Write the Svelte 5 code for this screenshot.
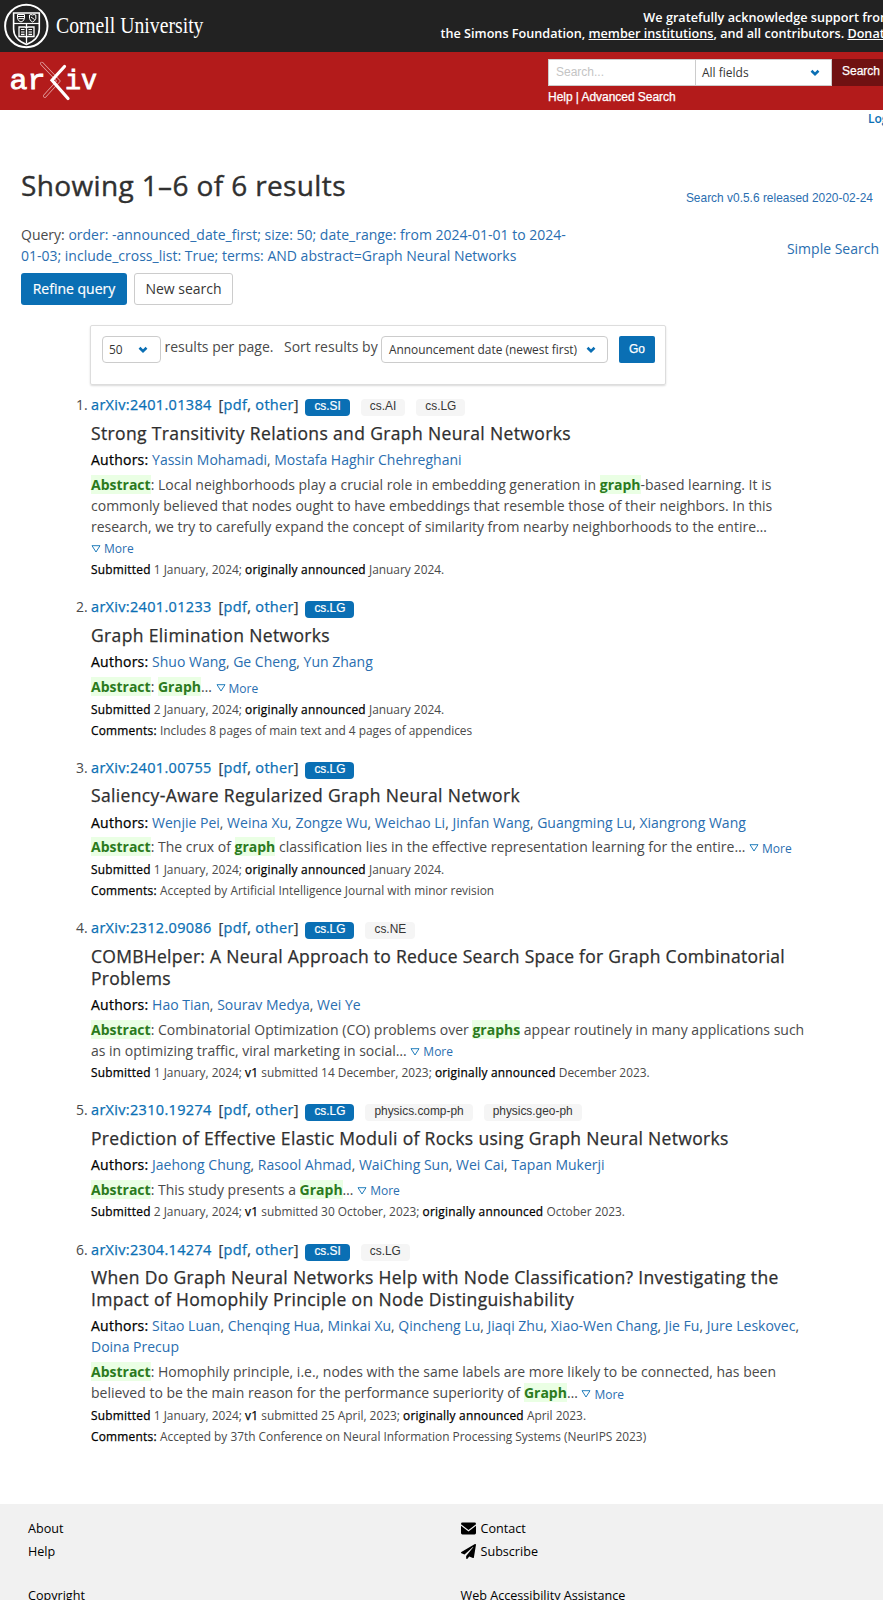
<script>
  const papers = [
    {
      id: '2401.01384',
      tags: ['cs.SI', 'cs.AI', 'cs.LG'],
      title: ['Strong Transitivity Relations and Graph Neural Networks'],
      authors: ['Yassin Mohamadi', 'Mostafa Haghir Chehreghani'],
      abstract: [
        ['Local neighborhoods play a crucial role in embedding generation in ', '*graph', '-based learning. It is'],
        ['commonly believed that nodes ought to have embeddings that resemble those of their neighbors. In this'],
        ['research, we try to carefully expand the concept of similarity from nearby neighborhoods to the entire…'],
        []
      ],
      submitted: '1 January, 2024',
      announced: 'January 2024'
    },
    {
      id: '2401.01233',
      tags: ['cs.LG'],
      title: ['Graph Elimination Networks'],
      authors: ['Shuo Wang', 'Ge Cheng', 'Yun Zhang'],
      abstract: [['*Graph', '… ']],
      submitted: '2 January, 2024',
      announced: 'January 2024',
      comments: 'Includes 8 pages of main text and 4 pages of appendices'
    },
    {
      id: '2401.00755',
      tags: ['cs.LG'],
      title: ['Saliency-Aware Regularized Graph Neural Network'],
      authors: ['Wenjie Pei', 'Weina Xu', 'Zongze Wu', 'Weichao Li', 'Jinfan Wang', 'Guangming Lu', 'Xiangrong Wang'],
      abstract: [['The crux of ', '*graph', ' classification lies in the effective representation learning for the entire… ']],
      submitted: '1 January, 2024',
      announced: 'January 2024',
      comments: 'Accepted by Artificial Intelligence Journal with minor revision'
    },
    {
      id: '2312.09086',
      tags: ['cs.LG', 'cs.NE'],
      title: ['COMBHelper: A Neural Approach to Reduce Search Space for Graph Combinatorial', 'Problems'],
      tracking: 0.28,
      authors: ['Hao Tian', 'Sourav Medya', 'Wei Ye'],
      abstract: [
        ['Combinatorial Optimization (CO) problems over ', '*graphs', ' appear routinely in many applications such'],
        ['as in optimizing traffic, viral marketing in social… ']
      ],
      submitted: '1 January, 2024',
      v1: '14 December, 2023',
      announced: 'December 2023'
    },
    {
      id: '2310.19274',
      tags: ['cs.LG', 'physics.comp-ph', 'physics.geo-ph'],
      title: ['Prediction of Effective Elastic Moduli of Rocks using Graph Neural Networks'],
      tracking: 0.33,
      authors: ['Jaehong Chung', 'Rasool Ahmad', 'WaiChing Sun', 'Wei Cai', 'Tapan Mukerji'],
      abstract: [['This study presents a ', '*Graph', '… ']],
      submitted: '2 January, 2024',
      v1: '30 October, 2023',
      announced: 'October 2023'
    },
    {
      id: '2304.14274',
      tags: ['cs.SI', 'cs.LG'],
      title: ['When Do Graph Neural Networks Help with Node Classification? Investigating the', 'Impact of Homophily Principle on Node Distinguishability'],
      tracking: 0.335,
      authors: ['Sitao Luan', 'Chenqing Hua', 'Minkai Xu', 'Qincheng Lu', 'Jiaqi Zhu', 'Xiao-Wen Chang', 'Jie Fu', 'Jure Leskovec', 'Doina Precup'],
      abstract: [
        ['Homophily principle, i.e., nodes with the same labels are more likely to be connected, has been'],
        ['believed to be the main reason for the performance superiority of ', '*Graph', '… ']
      ],
      submitted: '1 January, 2024',
      v1: '25 April, 2023',
      announced: 'April 2023',
      comments: 'Accepted by 37th Conference on Neural Information Processing Systems (NeurIPS 2023)'
    }
  ];
</script>

{#snippet chevron()}
  <svg class="chev" width="10" height="8" viewBox="0 0 10 8"><path d="M1.5 1.8 L5 5.2 L8.5 1.8" fill="none" stroke="#0a6fb4" stroke-width="2.6" /></svg>
{/snippet}

<div class="page">
  <header class="top">
    <svg class="cornell" width="220" height="52" viewBox="0 0 220 52">
      <g fill="none" stroke="#fff">
        <circle cx="26.3" cy="26" r="21.2" stroke-width="2" />
        <path d="M13.6 13 H39.3 V29 C39.3 37 34 41.500 26.400 44.500 C19 41.500 13.600 37 13.600 29 Z" stroke-width="1.6" />
        <path d="M14 23.500 H39" stroke-width="1.200" />
        <path d="M17.500 14.500 H24.500 V18.500 Q24 21 21 22 Q18 21 17.500 18.500 Z M18 16.500 H24 M18.500 18.600 H24" stroke-width="1" />
        <path d="M29.500 15 Q31 14 32.500 15 Q34 14 35.800 15 V18.500 Q35 21 32.600 22 Q30 21 29.500 18.500 Z M31 17 L34.500 19.500" stroke-width="1" />
        <path d="M19 27 H25 L26.500 28 L28 27 H34 V36.500 H28 L26.500 37.500 L25 36.500 H19 Z M26.500 24 V43.500" stroke-width="1.300" />
        <path d="M21 29.500 H24.500 M21 32 H24.500 M21 34.400 H24.500 M28.500 29.500 H32 M28.500 32 H32 M28.500 34.400 H32" stroke-width="1.200" />
      </g>
      <text x="56" y="33" textLength="147.500" lengthAdjust="spacingAndGlyphs" class="wordmark">Cornell University</text>
    </svg>
    <div class="support">
      <div>We gratefully acknowledge support from</div>
      <div>the Simons Foundation, <a href="#m">member institutions</a>, and all contributors. <a href="#d">Donate</a></div>
    </div>
  </header>

  <div class="red">
    <svg width="100" height="58" viewBox="0 52 100 58">
      <text x="9.500" y="88.500" textLength="36" lengthAdjust="spacingAndGlyphs" class="logo">ar</text>
      <text x="65" y="88.500" textLength="32" lengthAdjust="spacingAndGlyphs" class="logo">iv</text>
      <g fill="none" stroke-linecap="round">
        <path d="M41.800 63.500 L58.500 81 L44.800 96" stroke="#e9b4b4" stroke-width="3.400" />
        <path d="M41.800 63.500 L58.500 81 L44.800 96" stroke="#b31b1b" stroke-width="2.200" />
        <path d="M64.500 66.500 L52 80.300 L68 98.500" stroke="#fff" stroke-width="3.200" />
      </g>
    </svg>
    <div class="search">
      <div class="fields">
        <div class="input">Search...</div>
        <div class="allsel"><span>All fields</span>{@render chevron()}</div>
        <button class="sbtn">Search</button>
      </div>
      <div class="help">Help | Advanced Search</div>
    </div>
  </div>
  <div class="login">Login</div>

  <main>
    <div class="titlebar">
      <h1>Showing 1–6 of 6 results</h1>
      <a class="version" href="#v">Search v0.5.6 released 2020-02-24</a>
    </div>
    <div class="query">
      <div class="qtext">
        <div>Query: <a href="#q">order: -announced_date_first; size: 50; date_range: from 2024-01-01 to 2024-</a></div>
        <div><a href="#q">01-03; include_cross_list: True; terms: AND abstract=Graph Neural Networks</a></div>
      </div>
      <a class="simple" href="#s">Simple Search</a>
    </div>
    <div class="actions">
      <button class="refine">Refine query</button>
      <button class="new">New search</button>
    </div>

    <div class="sortbox">
      <div class="select n">50{@render chevron()}</div>
      <span class="per">results per page.</span>
      <span class="by">Sort results by</span>
      <div class="select s">Announcement date (newest first){@render chevron()}</div>
      <button class="go">Go</button>
    </div>

    <ol>
      {#each papers as p, i}
        <li>
          <div class="head">
            <span class="num">{i + 1}.</span>
            <span class="id"><a href="#a">arXiv:{p.id}</a></span>
            <span class="fmt">[<a href="#p">pdf</a>, <a href="#o">other</a>]</span>
            <span class="tags">
              {#each p.tags as t, j}<span class="tag" class:primary={j === 0}>{t}</span>{/each}
            </span>
          </div>
          <div class="title" style:letter-spacing="{p.tracking ?? 0.36}px">{#each p.title as line}<div>{line}</div>{/each}</div>
          <div class="authors"><b>Authors:</b>&nbsp;{#each p.authors as a, j}<a href="#au">{a}</a>{j < p.authors.length - 1 ? ', ' : ''}{/each}</div>
          <div class="abstract">
            {#each p.abstract as line, j}
              <div>{#if j === 0}<mark>Abstract</mark>:&nbsp;{/if}{#each line as s}{#if s[0] === '*'}<mark>{s.slice(1)}</mark>{:else}{s}{/if}{/each}{#if j === p.abstract.length - 1}<a class="more" href="#more"><svg width="10" height="8" viewBox="0 0 10 8"><path d="M1 .7 H9 L5 7 Z" fill="none" stroke="#0a6fb4" stroke-width=".9" /></svg>More</a>{/if}</div>
            {/each}
          </div>
          <div class="meta"><b>Submitted</b> {p.submitted}; {#if p.v1}<b>v1</b> submitted {p.v1};{' '}{/if}<b>originally announced</b> {p.announced}.</div>
          {#if p.comments}<div class="meta"><b>Comments:</b> {p.comments}</div>{/if}
        </li>
      {/each}
    </ol>
  </main>

  <footer>
    <div class="col">
      <div>About</div>
      <div>Help</div>
      <div class="gap">Copyright</div>
    </div>
    <div class="col">
      <div><svg width="15" height="13" viewBox="0 0 14 12"><path d="M1.300 .5 H12.700 Q14 .5 14 1.800 V2 L7 7.500 L0 2 V1.800 Q0 .5 1.300 .5 Z M0 3.400 L7 8.800 L14 3.400 V10.200 Q14 11.500 12.700 11.500 H1.300 Q0 11.500 0 10.200 Z" /></svg>Contact</div>
      <div><svg width="15" height="15" viewBox="0 0 512 512"><path d="M476 3.200 L12.500 270.600 c-18.100 10.400 -15.800 35.600 2.200 43.200 L121 358.400 l287.300 -253.200 c5.500 -4.900 13.300 2.600 8.600 8.300 L176 407 v80.500 c0 23.600 28.500 32.900 42.500 15.800 L282 426 l124.600 52.200 c14.200 6 30.400 -2.900 33 -18.200 l72 -432 C515 7.800 493.300 -6.800 476 3.200z" /></svg>Subscribe</div>
      <div class="gap">Web Accessibility Assistance</div>
    </div>
  </footer>
</div>

<style>
  :global(body) { margin: 0; }
  .page { width: 883px; height: 1600px; overflow: hidden; background: #fff; color: #4a4a4a; font: 14px/21px "Open Sans", sans-serif; white-space: nowrap; }
  a { color: #2a6eb0; text-decoration: none; }
  svg { display: block; }
  button { font-family: inherit; margin: 0; padding: 0; box-sizing: border-box; }

  .top { height: 52px; background: #222; display: flex; justify-content: space-between; overflow: hidden; }
  .wordmark { font: 22.500px "Liberation Serif", serif; fill: #fff; }
  .support { margin: 8.500px -9px 0 0; text-align: right; color: #fff; font-size: 12.650px; font-weight: 600; line-height: 16px; }
  .support a { color: #fff; text-decoration: underline; }

  .red { height: 58px; background: #b31b1b; display: flex; justify-content: space-between; }
  .logo { font: 27px "Liberation Mono", monospace; fill: #fff; stroke: #fff; stroke-width: .8; }
  .search { width: 335px; overflow: hidden; color: #fff; font: 12px/16px "Liberation Sans", sans-serif; }
  .fields { display: flex; margin-top: 7px; height: 27px; }
  .input { flex: none; box-sizing: border-box; width: 148px; border: 1px solid #ccc; background: #fff; color: #c4c4c4; padding: 4px 7px; }
  .allsel { flex: none; box-sizing: border-box; width: 136px; border: 1px solid #ccc; border-left: 0; background: #fff; color: #363636; padding: 0 11px 0 6px; display: flex; align-items: center; justify-content: space-between; font: 12px "Open Sans", sans-serif; }
  .sbtn { flex: none; width: 57px; border: 0; background: #701112; color: #fff; font: 12px "Liberation Sans", sans-serif; text-align: left; padding-left: 10px; padding-bottom: 4px; }
  .sbtn, .help, .go { -webkit-text-stroke: .25px #fff; }
  .help { margin-top: 3px; letter-spacing: -.04px; }
  .login { height: 20px; padding-left: 868px; font-size: 12px; line-height: 18px; font-weight: 600; color: #0a6fb4; }

  main { height: 1374px; box-sizing: border-box; padding-top: 34px; }
  .titlebar { height: 53px; padding: 0 10px 0 21px; display: flex; justify-content: space-between; }
  h1 { margin: 0; font-size: 28px; line-height: 42px; font-weight: 400; color: #303030; letter-spacing: .37px; -webkit-text-stroke: .4px #303030; }
  .version { font: 11.900px/14px "Liberation Sans", sans-serif; margin-top: 27px; letter-spacing: .02px; }
  .query { height: 56px; padding: 7px 4px 0 21px; box-sizing: border-box; display: flex; justify-content: space-between; }
  .simple { margin-top: 14px; }
  .actions { display: flex; gap: 7px; padding-left: 21px; height: 32px; }
  .actions button { font-size: 14px; border-radius: 3px; height: 32px; padding-bottom: 2px; }
  .refine { width: 106px; border: 0; background: #0a6fb4; color: #fff; -webkit-text-stroke: .2px #fff; }
  .actions .new { width: 99px; border: 1px solid #ccc; background: #fff; color: #363636; }

  .sortbox { box-sizing: border-box; width: 576px; height: 60px; margin: 20px 0 0 90px; border: 1px solid #ddd; border-radius: 2px; box-shadow: 0 1px 2px rgba(0, 0, 0, .15); padding: 10px 10px 10px 11px; display: flex; align-items: flex-start; }
  .select { box-sizing: border-box; height: 27px; border: 1px solid #ccc; border-radius: 4px; display: flex; align-items: center; justify-content: space-between; color: #363636; font-size: 11.900px; }
  .n { width: 59px; padding: 0 12px 0 6px; }
  .s { width: 227px; padding: 0 11px 0 7px; margin-left: auto; margin-right: 11px; }
  .per { margin-left: 3.500px; }
  .by { margin-left: 10.500px; }
  .go { width: 36px; height: 27px; border: 0; border-radius: 2px; background: #0a6fb4; color: #fff; font: 12px "Liberation Sans", sans-serif; padding-bottom: 2px; }

  ol { list-style: none; margin: 9.200px 0 0; padding: 0 0 0 91px; }
  li { margin-bottom: 16.200px; }
  .head { display: flex; height: 24px; color: #363636; }
  .num { width: 15px; margin-left: -15px; color: #4a4a4a; }
  .id { width: 127.500px; }
  .id, .fmt { font-size: 14.500px; letter-spacing: .32px; -webkit-text-stroke: .25px; }
  .id a, .fmt a { color: #0a6fb4; }
  .tags { margin-left: 6.500px; display: flex; }
  .tag { height: 17px; margin: 5px 11px 0 0; padding: 0 9px; border-radius: 4px; background: #f5f5f5; color: #363636; font: 11.900px/14px "Liberation Sans", sans-serif; }
  .primary { background: #0a6fb4; color: #fff; -webkit-text-stroke: .2px #fff; }
  .title { padding-top: 3.600px; color: #2e2e2e; font-size: 17.500px; line-height: 22px; -webkit-text-stroke: .25px #2e2e2e; }
  .authors { padding-top: 5.200px; width: 712px; white-space: normal; }
  b { font-weight: 400; color: #000; letter-spacing: .24px; -webkit-text-stroke: .25px #000; }
  .abstract { padding-top: 3.800px; }
  .abstract > div { height: 21px; }
  mark { background: #eaffe4; color: #2b7a1d; font-weight: 700; }
  .more { font-size: 12px; display: inline-flex; gap: 3px; align-items: center; }
  .abstract + .meta { padding-top: 1.500px; }
  .meta { font-size: 11.900px; height: 21px; }

  footer { height: 96px; background: #f1f1f1; display: flex; color: #000; font-size: 12.600px; }
  .col { padding: 13px 0 0 28px; width: 404.500px; }
  .col > div { height: 23px; line-height: 21px; display: flex; gap: 5px; align-items: center; }
  .col > .gap { margin-top: 21px; }
</style>
